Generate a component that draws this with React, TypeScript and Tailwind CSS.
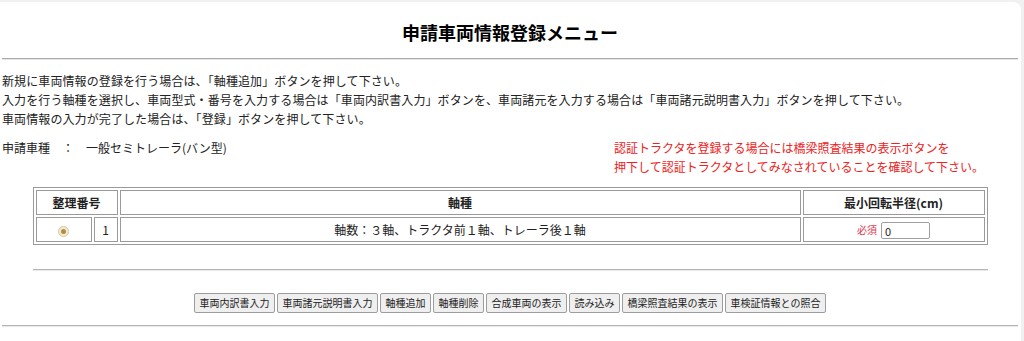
import React, { useState } from 'react';

const buttons = [
  '車両内訳書入力',
  '車両諸元説明書入力',
  '軸種追加',
  '軸種削除',
  '合成車両の表示',
  '読み込み',
  '橋梁照査結果の表示',
  '車検証情報との照合',
];

export default function App() {
  const [radius, setRadius] = useState('0');

  return (
    <div className="min-h-[341px] bg-[#f1f1f1] pt-[2px] pr-[3px] font-['Noto_Sans_CJK_JP',sans-serif] text-[12px] text-[#222]">
      <div className="bg-white rounded-tr-[8px] pl-[2px] pr-[3px] pb-[14px] min-h-[339px]">
        {/* Title */}
        <h1 className="pt-[18px] pb-[14px] text-center text-[18px] leading-[24px] font-bold text-black">
          申請車両情報登録メニュー
        </h1>
        <div className="border-t border-t-[#a9a9a9] border-b border-b-[#e6e6e6]" />

        {/* Instructions */}
        <div className="mt-[11px] leading-[19px] tracking-[0.1px]">
          <p>新規に車両情報の登録を行う場合は、「軸種追加」ボタンを押して下さい。</p>
          <p>入力を行う軸種を選択し、車両型式・番号を入力する場合は「車両内訳書入力」ボタンを、車両諸元を入力する場合は「車両諸元説明書入力」ボタンを押して下さい。</p>
          <p>車両情報の入力が完了した場合は、「登録」ボタンを押して下さい。</p>
        </div>

        {/* Vehicle type + notice */}
        <div className="mt-[10px] flex leading-[19px]">
          <div className="w-[612px] shrink-0">申請車種　：　一般セミトレーラ(バン型)</div>
          <div className="text-[#ee2222]">
            <p>認証トラクタを登録する場合には橋梁照査結果の表示ボタンを</p>
            <p>押下して認証トラクタとしてみなされていることを確認して下さい。</p>
          </div>
        </div>

        {/* Axle table */}
        <table className="mt-[11px] mx-auto w-[955px] border border-[#9a9a9a] border-separate border-spacing-[2px]">
          <thead>
            <tr className="h-[25px]">
              <th colSpan={2} className="border border-[#9a9a9a] font-bold text-center">整理番号</th>
              <th className="border border-[#9a9a9a] font-bold text-center">軸種</th>
              <th className="w-[182px] border border-[#9a9a9a] font-bold text-center">最小回転半径(cm)</th>
            </tr>
          </thead>
          <tbody>
            <tr className="h-[25px]">
              <td className="w-[56px] border border-[#9a9a9a] text-center">
                <span className="inline-flex h-[11px] w-[11px] items-center justify-center rounded-full border border-[#d9c79c] bg-[#f3ead4] align-middle">
                  <span className="h-[5px] w-[5px] rounded-full bg-[#b08d4a]" />
                </span>
              </td>
              <td className="w-[24px] border border-[#9a9a9a] text-center">1</td>
              <td className="border border-[#9a9a9a] text-center">軸数：３軸、トラクタ前１軸、トレーラ後１軸</td>
              <td className="border border-[#9a9a9a] text-center">
                <span className="text-[10px] text-[#e8334a] mr-[4px]">必須</span>
                <input
                  value={radius}
                  onChange={(e) => setRadius(e.target.value)}
                  className="h-[17px] w-[49px] rounded-[2px] border border-[#a0a0a0] px-[3px] text-[11px] align-middle"
                />
              </td>
            </tr>
          </tbody>
        </table>

        <div className="mt-[24px] mx-auto w-[955px] border-t border-t-[#b5b5b5] border-b border-b-[#e8e8e8]" />

        {/* Action buttons */}
        <div className="mt-[22px] flex justify-center gap-[2px]">
          {buttons.map((b) => (
            <button
              key={b}
              className="h-[20px] rounded-[2px] border border-[#9d9d9d] bg-[#efefef] px-[4.5px] text-[10px] leading-[18px] text-[#222]"
            >
              {b}
            </button>
          ))}
        </div>

        <div className="mt-[12px] border-t border-t-[#b5b5b5] border-b border-b-[#e8e8e8]" />
      </div>
    </div>
  );
}
